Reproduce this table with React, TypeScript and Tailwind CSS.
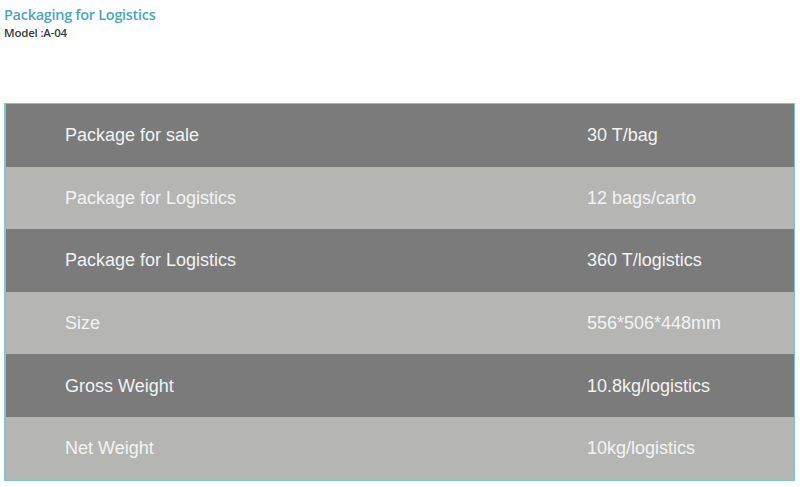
const rows = [
  { label: 'Package for sale', value: '30 T/bag' },
  { label: 'Package for Logistics', value: '12 bags/carto' },
  { label: 'Package for Logistics', value: '360 T/logistics' },
  { label: 'Size', value: '556*506*448mm' },
  { label: 'Gross Weight', value: '10.8kg/logistics' },
  { label: 'Net Weight', value: '10kg/logistics' },
];

export default function App() {
  return (
    <div className="w-[800px] h-[487px] bg-white font-['Liberation_Sans',Arial,sans-serif]">
      {/* Heading */}
      <div className="pl-[4px] pt-[5px] h-[103px]">
        <h1 className="font-['Open_Sans',sans-serif] font-semibold text-[14.5px] leading-[20px] text-[#4aa7b7] tracking-[-0.3px]">
          Packaging for Logistics
        </h1>
        <p className="mt-[1px] font-['Open_Sans',sans-serif] font-semibold text-[11.5px] leading-[14px] text-[#3a3a3a] tracking-[-0.2px]">
          Model :A-04
        </p>
      </div>

      {/* Spec table */}
      <div className="ml-[4px] w-[791px] border border-[#7cc6d0] border-l-2">
        {rows.map((row, i) => (
          <div
            key={i}
            className={`flex items-center h-[62.6px] pt-[1px] text-[18px] text-[#f3f3f3] ${
              i % 2 === 0 ? 'bg-[#7a7b7a]' : 'bg-[#b5b6b4]'
            }`}
          >
            <div className="w-[581px] pl-[59px]">{row.label}</div>
            <div>{row.value}</div>
          </div>
        ))}
      </div>
    </div>
  );
}
